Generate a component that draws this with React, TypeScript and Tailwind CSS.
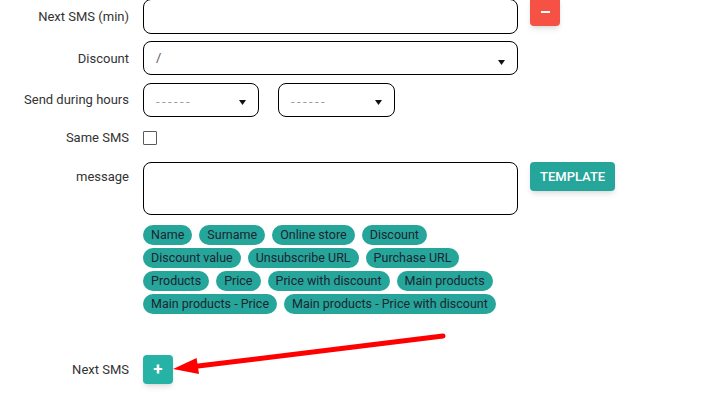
import { FC, ReactNode } from 'react';

const Caret: FC = () => (
  <svg width="7" height="5" viewBox="0 0 7 5" className="shrink-0">
    <polygon points="0,0 7,0 3.5,5" fill="#111" />
  </svg>
);

const Label: FC<{ children: ReactNode; className?: string }> = ({ children, className = '' }) => (
  <div className={`w-[129px] shrink-0 text-right text-[13px] leading-5 text-[#333] ${className}`}>{children}</div>
);

const chipRows = [
  ['Name', 'Surname', 'Online store', 'Discount'],
  ['Discount value', 'Unsubscribe URL', 'Purchase URL'],
  ['Products', 'Price', 'Price with discount', 'Main products'],
  ['Main products - Price', 'Main products - Price with discount'],
];

const Chip: FC<{ text: string }> = ({ text }) => (
  <span className="h-5 px-2 rounded-full bg-[#26a69a] text-[12.5px] leading-5 text-[#1c2533] whitespace-nowrap">
    {text}
  </span>
);

const HourSelect: FC<{ width: string }> = ({ width }) => (
  <div className={`${width} h-[34px] border border-black rounded-lg flex items-center justify-between pl-3 pr-3`}>
    <span className="text-[13px] tracking-[2.4px] text-[#9a9a9a] pt-1">------</span>
    <span className="pt-1"><Caret /></span>
  </div>
);

export default function App() {
  return (
    <div
      className="relative w-[722px] h-[402px] overflow-hidden bg-white"
      style={{ fontFamily: 'Roboto, "Liberation Sans", sans-serif' }}
    >
      <div className="flex flex-col">
        {/* Next SMS (min) */}
        <div className="flex items-center -mt-px">
          <Label>Next SMS (min)</Label>
          <div className="ml-[14px] w-[375px] h-[35px] border border-black rounded-lg" />
          <button className="ml-3 self-start -mt-[2px] w-[30px] h-[29px] bg-[#f55145] rounded-sm shadow-md flex items-center justify-center">
            <span className="block w-[9px] h-[2px] bg-white" />
          </button>
        </div>

        {/* Discount */}
        <div className="flex items-center mt-[7px]">
          <Label className="pt-px">Discount</Label>
          <div className="ml-[14px] w-[375px] h-[34px] border border-black rounded-lg flex items-center justify-between pl-3 pr-3">
            <span className="text-[13px] text-[#555]">/</span>
            <span className="pt-2"><Caret /></span>
          </div>
        </div>

        {/* Send during hours */}
        <div className="flex items-center mt-[8px]">
          <Label>Send during hours</Label>
          <div className="ml-[14px] flex gap-[19px]">
            <HourSelect width="w-[116px]" />
            <HourSelect width="w-[117px]" />
          </div>
        </div>

        {/* Same SMS */}
        <div className="flex items-center mt-[11px]">
          <Label>Same SMS</Label>
          <div className="ml-[14px] w-[14px] h-[14px] border-[1.5px] border-[#5a5a5a] rounded-[1px]" />
        </div>

        {/* message */}
        <div className="flex items-start mt-[14px]">
          <Label className="pt-[5px]">message</Label>
          <div className="ml-[14px] flex flex-col">
            <div className="w-[375px] h-[53px] border border-black rounded-lg" />
            <div className="mt-[10px] flex flex-col gap-[3px]">
              {chipRows.map((row, i) => (
                <div key={i} className="flex gap-[7px]">
                  {row.map((c) => (
                    <Chip key={c} text={c} />
                  ))}
                </div>
              ))}
            </div>
          </div>
          <button className="ml-3 h-[29px] px-[10px] bg-[#26a69a] rounded-sm shadow-md text-white text-[13px] font-medium uppercase">
            Template
          </button>
        </div>

        {/* Next SMS */}
        <div className="flex items-center mt-[41px]">
          <Label>Next SMS</Label>
          <button className="ml-[14px] w-[30px] h-[29px] bg-[#26b3a6] rounded-sm shadow-md flex items-center justify-center text-white text-[17px] font-bold leading-none">
            +
          </button>
        </div>
      </div>

      {/* annotation arrow */}
      <svg className="absolute inset-0 pointer-events-none" width="722" height="402" viewBox="0 0 722 402">
        <line x1="443" y1="336" x2="194" y2="366.5" stroke="#ff0000" strokeWidth="5" strokeLinecap="round" />
        <polygon points="173,369 196.6,358 199,374" fill="#ff0000" />
      </svg>
    </div>
  );
}
